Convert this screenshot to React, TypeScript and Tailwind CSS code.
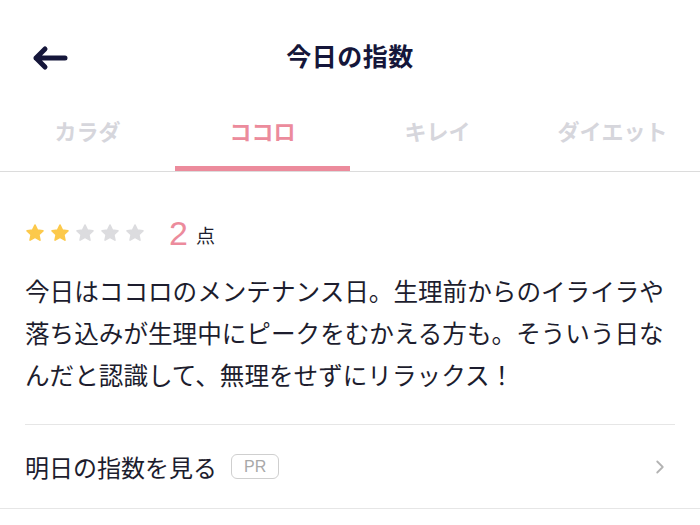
import { ChevronRight } from 'lucide-react';

const jp = "font-['Noto_Sans_CJK_JP','Noto_Sans',sans-serif]";

const tabs = ['カラダ', 'ココロ', 'キレイ', 'ダイエット'];

function StarIcon({ on }: { on: boolean }) {
  return (
    <svg width="20" height="20" viewBox="0 0 24 24" className="shrink-0">
      <polygon
        points="12,2.5 14.9,8.6 21.5,9.4 16.6,13.9 17.9,20.5 12,17.2 6.1,20.5 7.4,13.9 2.5,9.4 9.1,8.6"
        fill={on ? '#fcc94b' : '#dcdcdf'}
        stroke={on ? '#fcc94b' : '#dcdcdf'}
        strokeWidth="2"
        strokeLinejoin="round"
      />
    </svg>
  );
}

export default function App() {
  const score = 2;

  return (
    <div className={`w-[700px] h-[525px] bg-white overflow-hidden ${jp}`}>
      {/* Header */}
      <div className="relative h-[116px] flex items-center justify-center">
        <button className="absolute left-[31px] top-[44px] p-0">
          <svg width="38" height="28" viewBox="0 0 38 28">
            <path
              d="M5 14 H34 M14 5 L5 14 L14 23"
              fill="none"
              stroke="#15163a"
              strokeWidth="5"
              strokeLinecap="round"
              strokeLinejoin="round"
            />
          </svg>
        </button>
        <h1 className="mb-[4px] text-[25px] font-bold text-[#15163a] tracking-[0.5px]">今日の指数</h1>
      </div>

      {/* Tabs */}
      <div className="flex border-b border-[#dcdcdc]">
        {tabs.map((t, i) => (
          <div key={t} className="flex-1 h-[55px] flex flex-col items-center">
            <span
              className={`-mt-[1px] text-[22px] leading-[30px] font-bold ${
                i === 1 ? 'text-[#ec8b9c]' : 'text-[#d6d6dc]'
              }`}
            >
              {t}
            </span>
            <div className="flex-1" />
            <div className={`w-full h-[5px] ${i === 1 ? 'bg-[#ec8b9c]' : 'bg-transparent'}`} />
          </div>
        ))}
      </div>

      {/* Content */}
      <div className="px-[25px]">
        <div className="pt-[43px] h-[79px] flex items-center">
          <div className="flex items-center gap-[5px]">
            {[0, 1, 2, 3, 4].map((n) => (
              <StarIcon key={n} on={n < score} />
            ))}
          </div>
          <span className="ml-[24px] text-[34px] leading-none text-[#ec8b9c] font-['Liberation_Sans',sans-serif]">
            {score}
          </span>
          <span className="ml-[8px] mt-[4px] text-[19px] text-[#1d1d2e]">点</span>
        </div>

        <p className="mt-[18px] text-[24.6px] leading-[42px] text-[#1d1d2e] whitespace-nowrap">
          今日はココロのメンテナンス日。生理前からのイライラや
          <br />
          落ち込みが生理中にピークをむかえる方も。そういう日な
          <br />
          んだと認識して、無理をせずにリラックス！
        </p>

        <div className="mt-[29px] border-t border-[#e6e6e6]" />

        <div className="h-[83px] flex items-center">
          <span className="text-[24px] text-[#1d1d2e]">明日の指数を見る</span>
          <span className="ml-[14px] h-[25px] px-[12px] flex items-center rounded-[6px] border border-[#cfcfcf] text-[16px] text-[#a8a8a8] font-['Liberation_Sans',sans-serif]">
            PR
          </span>
          <ChevronRight className="ml-auto mr-[4px] text-[#b3b3b3]" size={22} strokeWidth={2} />
        </div>
      </div>
      <div className="border-t border-[#e6e6e6]" />
    </div>
  );
}
